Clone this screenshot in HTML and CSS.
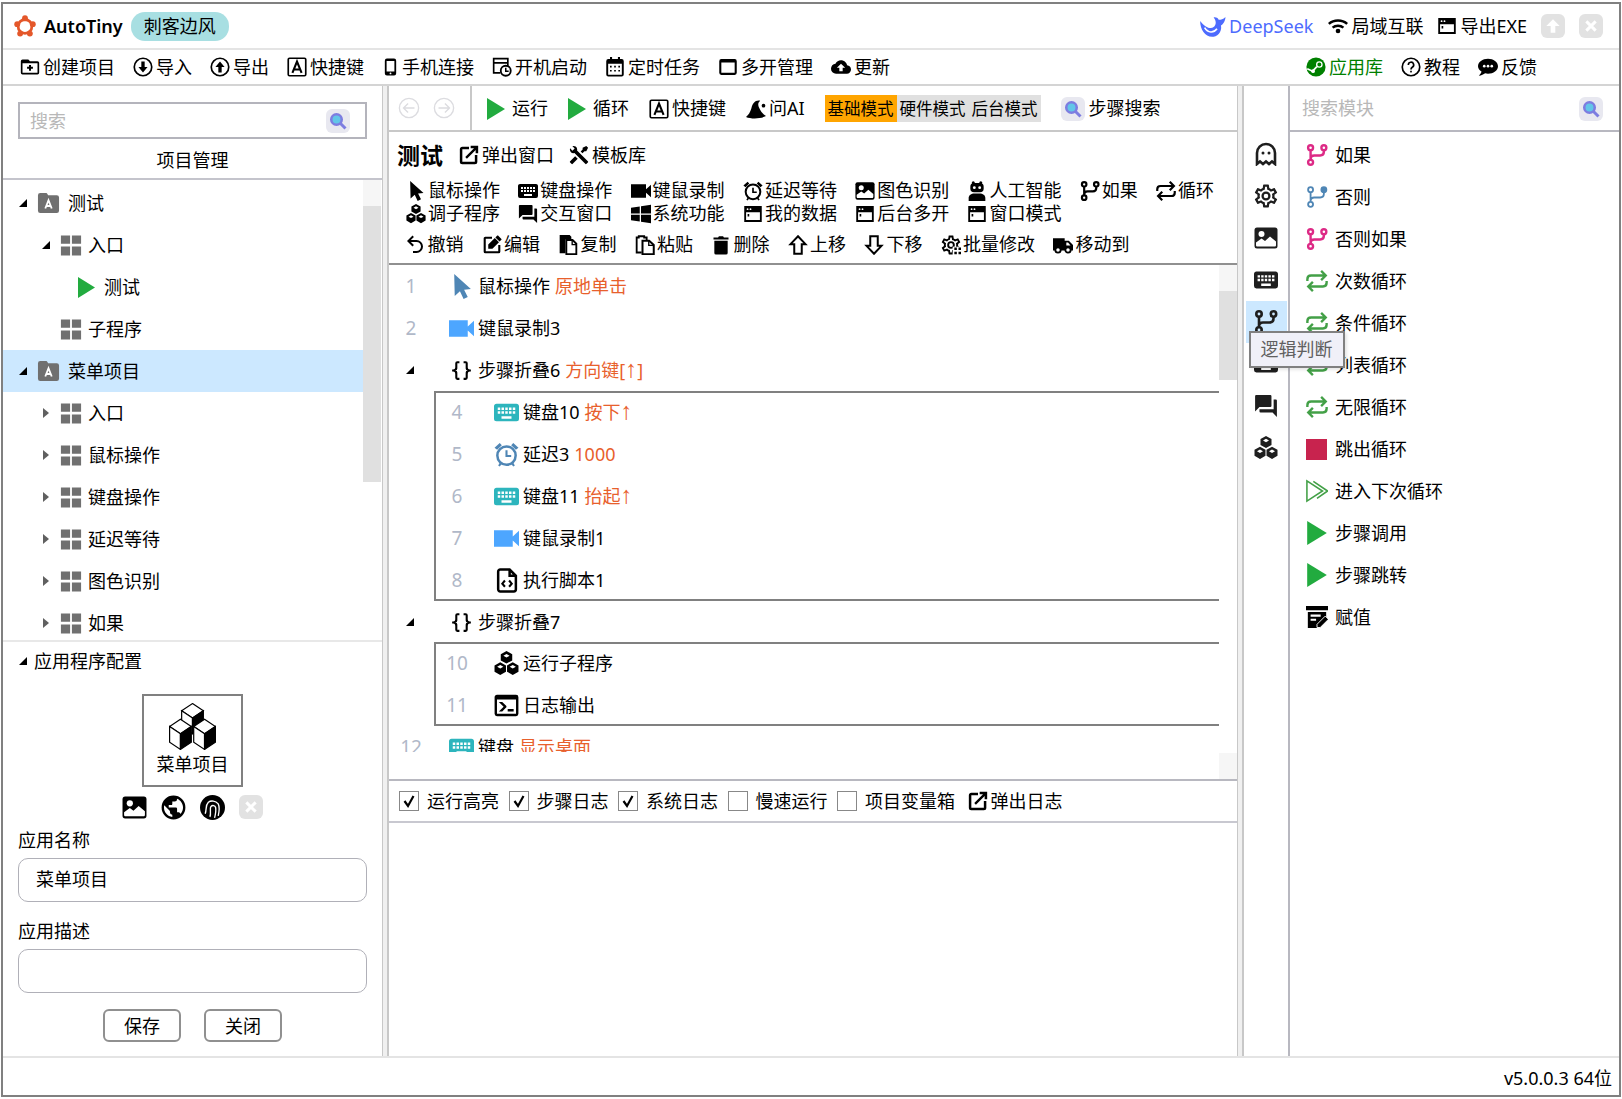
FILE: index.html
```html
<!DOCTYPE html>
<html lang="zh-CN">
<head>
    <meta charset="UTF-8">
    <title>AutoTiny</title>
    <link rel="stylesheet" href="styles.css">
</head>
<body>
<svg class="sprite" xmlns="http://www.w3.org/2000/svg">
    <defs>
        <g id="cube">
            <path d="M24 2L33 8L24 14L15 8Z" fill="#fff" stroke="#000" stroke-width="1"/>
            <path d="M15 8L24 14V27L15 21Z" fill="#fff" stroke="#000" stroke-width="1"/>
            <path d="M33 8L24 14V27L33 21Z" fill="#000" stroke="#000" stroke-width="1"/>
        </g>
        <symbol id="logo" viewBox="0 0 24 24">
            <circle cx="12" cy="12.500" r="7.500" fill="none" stroke="currentColor" stroke-width="3"/>
            <circle cx="12" cy="3.500" r="3.200"/><circle cx="20.500" cy="10" r="3.200"/><circle cx="17.300" cy="20.300" r="3.200"/><circle cx="6.700" cy="20.300" r="3.200"/><circle cx="3.500" cy="10" r="3.200"/>
        </symbol>
        <symbol id="whale" viewBox="0 0 24 24">
            <path fill="currentColor" d="M1 7C1 15 6 22 13 21C18 20.300 20.500 15 19.500 11C21.500 10 23.500 7 23.500 3.500C21.500 5.500 19.500 6 17.500 6C16.500 4 14.500 3.500 13 4C15.500 7 15.500 10.500 13 12.500C10 15 5 12 1 7Z"/>
            <path d="M5 13C8 18 13 18 16 14" fill="none" stroke="#fff" stroke-width="1.500"/>
        </symbol>
        <symbol id="wifi" viewBox="0 0 24 24">
            <path d="M1 9.500C7 4 17 4 23 9.500M5.500 14C9 11 15 11 18.500 14" fill="none" stroke="currentColor" stroke-width="3"/><circle cx="12" cy="18" r="2.800" fill="currentColor"/>
        </symbol>
        <symbol id="win" viewBox="0 0 24 24">
            <path fill="currentColor" d="M1.500 2.500H22.500V21.500H1.500ZM3.700 10V19.300H20.300V10Z"/>
            <circle cx="5.500" cy="6.200" r="1.100" fill="#fff"/><circle cx="9" cy="6.200" r="1.100" fill="#fff"/><rect x="5.500" y="12" width="2" height="3" fill="currentColor"/>
        </symbol>
        <symbol id="box" viewBox="0 0 24 24">
            <path fill="currentColor" d="M4 2.500H20A2.500 2.500 0 0 1 22.500 5V19A2.500 2.500 0 0 1 20 21.500H4A2.500 2.500 0 0 1 1.500 19V5A2.500 2.500 0 0 1 4 2.500ZM4 6.500V19H20V6.500Z"/>
        </symbol>
        <symbol id="folder-plus" viewBox="0 0 24 24">
            <path fill="currentColor" d="M3 3H10L12 5H21A2 2 0 0 1 23 7V19A2 2 0 0 1 21 21H3A2 2 0 0 1 1 19V5A2 2 0 0 1 3 3ZM3 7.500V19H21V7.500Z"/>
            <path d="M12 9.500V16.500M8.500 13H15.500" stroke="currentColor" stroke-width="2.400"/>
        </symbol>
        <symbol id="circle-down" viewBox="0 0 24 24">
            <circle cx="12" cy="12" r="10.500" fill="none" stroke="currentColor" stroke-width="2"/>
            <path fill="currentColor" d="M10 5.500H14V12H17.500L12 18.500L6.500 12H10Z"/>
        </symbol>
        <symbol id="circle-up" viewBox="0 0 24 24">
            <circle cx="12" cy="12" r="10.500" fill="none" stroke="currentColor" stroke-width="2"/>
            <path fill="currentColor" d="M10 18.500H14V12H17.500L12 5.500L6.500 12H10Z"/>
        </symbol>
        <symbol id="key-a" viewBox="0 0 24 24">
            <rect x="1.500" y="1.500" width="21" height="21" rx="1.500" fill="none" stroke="currentColor" stroke-width="2"/>
            <path d="M6.500 19L12 5.500L17.500 19M8.300 15H15.700" fill="none" stroke="currentColor" stroke-width="2.500"/>
        </symbol>
        <symbol id="phone" viewBox="0 0 24 24">
            <path fill="currentColor" d="M7 0H17A3 3 0 0 1 20 3V21A3 3 0 0 1 17 24H7A3 3 0 0 1 4 21V3A3 3 0 0 1 7 0ZM6.500 3.500V18.500H17.500V3.500Z"/>
            <circle cx="12" cy="21" r="1.300" fill="#fff"/>
        </symbol>
        <symbol id="startup" viewBox="0 0 24 24">
            <path fill="currentColor" d="M1 1H20V11H18V8H3V18H10V20H1ZM3 3V6H18V3Z"/>
            <circle cx="16.500" cy="16.500" r="6" fill="#fff" stroke="currentColor" stroke-width="2.200"/>
            <path d="M16.500 13V17H20" fill="none" stroke="currentColor" stroke-width="1.800"/>
        </symbol>
        <symbol id="calendar" viewBox="0 0 24 24">
            <path fill="currentColor" d="M6 0H8.500V2.500H15.500V0H18V2.500H20A2.500 2.500 0 0 1 22.500 5V21A2.500 2.500 0 0 1 20 23.500H4A2.500 2.500 0 0 1 1.500 21V5A2.500 2.500 0 0 1 4 2.500H6ZM3.800 8V21.200H20.200V8Z"/>
            <path d="M6 10.500H8V12.500H6ZM11 10.500H13V12.500H11ZM16 10.500H18V12.500H16ZM6 15.500H8V17.500H6ZM11 15.500H13V17.500H11ZM16 15.500H18V17.500H16Z" fill="currentColor"/>
        </symbol>
        <symbol id="cloud" viewBox="0 0 24 24">
            <path fill="currentColor" d="M14,13V17H10V13H7L12,8L17,13M19.350,10.030C18.670,6.590 15.640,4 12,4C9.110,4 6.600,5.640 5.350,8.030C2.340,8.360 0,10.900 0,14A6,6 0 0,0 6,20H19A5,5 0 0,0 24,15C24,12.360 21.950,10.220 19.350,10.030Z"/>
        </symbol>
        <symbol id="steam" viewBox="0 0 24 24">
            <circle cx="12" cy="12" r="11.500" fill="currentColor"/>
            <circle cx="16" cy="9" r="3.200" fill="none" stroke="#fff" stroke-width="1.600"/>
            <path d="M1.500 14L8 17L13 11.500" fill="none" stroke="#fff" stroke-width="2"/><circle cx="8.500" cy="17" r="2.200" fill="#fff"/>
        </symbol>
        <symbol id="help" viewBox="0 0 24 24">
            <circle cx="12" cy="12" r="10.500" fill="none" stroke="currentColor" stroke-width="2"/>
            <path d="M8.800 9.500A3.200 3.200 0 1 1 13.500 12.300C12.500 13 12 13.500 12 15" fill="none" stroke="currentColor" stroke-width="2"/><rect x="11" y="16.500" width="2" height="2" fill="currentColor"/>
        </symbol>
        <symbol id="comment" viewBox="0 0 24 24">
            <path fill="currentColor" d="M12 2C18.500 2 24 6 24 11C24 16 18.500 20 12 20C10.800 20 9.600 19.900 8.500 19.600C7 20.800 4 22.500 1 22.500C2.800 20.500 4 19 4.200 17.500C1.700 16 0 13.700 0 11C0 6 5.500 2 12 2Z"/>
            <circle cx="7.500" cy="11" r="1.600" fill="#fff"/><circle cx="12" cy="11" r="1.600" fill="#fff"/><circle cx="16.500" cy="11" r="1.600" fill="#fff"/>
        </symbol>
        <symbol id="arrow-up" viewBox="0 0 24 24">
            <path d="M12 2L22 12H15.500V22H8.500V12H2Z" fill="currentColor"/>
        </symbol>
        <symbol id="close" viewBox="0 0 24 24">
            <path d="M5 5L19 19M19 5L5 19" stroke="currentColor" stroke-width="4.500"/>
        </symbol>
        <symbol id="search" viewBox="0 0 24 24">
            <path d="M14 14L22 22" stroke="#7d7de0" stroke-width="4"/>
            <circle cx="10" cy="10" r="7" fill="#62c6e8" stroke="#7d7de0" stroke-width="3.400"/>
        </symbol>
        <symbol id="folder-a" viewBox="0 0 24 24">
            <path fill="currentColor" d="M3 1H9C10 1 10.500 1.500 11 2.500L11.500 3.500H21A2.500 2.500 0 0 1 23.500 6V20.500A2.500 2.500 0 0 1 21 23H3A2.500 2.500 0 0 1 .5 20.500V3.500A2.500 2.500 0 0 1 3 1Z"/>
            <path d="M8.500 18L12 9L15.500 18M9.700 15.300H14.300" fill="none" stroke="#fff" stroke-width="2"/>
        </symbol>
        <symbol id="grid" viewBox="0 0 24 24">
            <path fill="currentColor" d="M1 1H11V10H1ZM13 1H23V10H13ZM1 13H11V23H1ZM13 13H23V23H13Z"/>
        </symbol>
        <symbol id="play" viewBox="0 0 18 22">
            <path fill="currentColor" d="M0 0L18 11L0 22Z"/>
        </symbol>
        <symbol id="tri-open" viewBox="0 0 10 10">
            <path d="M9 1V9H1Z" fill="currentColor"/>
        </symbol>
        <symbol id="tri-closed" viewBox="0 0 10 12">
            <path d="M2 1L8 6L2 11Z" fill="currentColor"/>
        </symbol>
        <symbol id="nav-left" viewBox="0 0 24 24">
            <circle cx="12" cy="12" r="10.500" fill="none" stroke="currentColor" stroke-width="1.500"/>
            <path d="M18 12H6M11 7L6 12L11 17" fill="none" stroke="currentColor" stroke-width="1.500"/>
        </symbol>
        <symbol id="nav-right" viewBox="0 0 24 24">
            <circle cx="12" cy="12" r="10.500" fill="none" stroke="currentColor" stroke-width="1.500"/>
            <path d="M6 12H18M13 7L18 12L13 17" fill="none" stroke="currentColor" stroke-width="1.500"/>
        </symbol>
        <symbol id="hat" viewBox="0 0 24 24">
            <path fill="currentColor" d="M0 21.500C3 19 5 16 6.500 11C8 5 11 1 17 2C13.500 5 14.500 8.500 16.500 12C18 15 20.500 18.500 24 20.500C17 24 6 24 0 21.500Z"/>
            <circle cx="21" cy="8" r="2.200"/>
        </symbol>
        <symbol id="open" viewBox="0 0 24 24">
            <path fill="currentColor" d="M14,1V4H18L7.500,14.500L9.500,16.500L20,6V10H23V1ZM19,20H4V5H12V2H4C2.300,2 1,3.300 1,5V20A3,3 0 0,0 4,23H19A3,3 0 0,0 22,20V12H19Z"/>
        </symbol>
        <symbol id="tools" viewBox="1 1 22 22">
            <path fill="currentColor" d="M21.710 20.290L20.290 21.710A1 1 0 0 1 18.880 21.710L7 9.850A3.810 3.810 0 0 1 6 10A4 4 0 0 1 2.220 4.700L4.760 7.240L5.290 6.710L6.710 5.290L7.240 4.760L4.700 2.220A4 4 0 0 1 10 6A3.810 3.810 0 0 1 9.850 7L21.710 18.880A1 1 0 0 1 21.710 20.290M2.290 18.880A1 1 0 0 0 2.290 20.290L3.710 21.710A1 1 0 0 0 5.120 21.710L10.590 16.250L7.760 13.420M20 2L16 4V6L13.830 8.170L15.830 10.170L18 8H20L22 4Z"/>
        </symbol>
        <symbol id="cursor" viewBox="0 0 24 24">
            <path fill="currentColor" d="M5 0L21 14.500L14.500 15L18 22L14 24L10.500 16.500L5.500 21Z"/>
        </symbol>
        <symbol id="keyboard" viewBox="2 4 20 16">
            <path fill="currentColor" d="M19,10H17V8H19M19,13H17V11H19M16,10H14V8H16M16,13H14V11H16M16,17H8V15H16M7,10H5V8H7M7,13H5V11H7M8,11H10V13H8M8,8H10V10H8M11,11H13V13H11M11,8H13V10H11M20,5H4C2.890,5 2,5.890 2,7V17A2,2 0 0,0 4,19H20A2,2 0 0,0 22,17V7C22,5.890 21.100,5 20,5Z"/>
        </symbol>
        <symbol id="video" viewBox="0 0 24 24">
            <path fill="currentColor" d="M0 4H18V10L24 4.500V19.500L18 14V20H0Z"/>
        </symbol>
        <symbol id="alarm" viewBox="0 0 24 24">
            <circle cx="12" cy="13" r="8.800" fill="none" stroke="currentColor" stroke-width="2.400"/>
            <path d="M12 8V13.500H16.500" fill="none" stroke="currentColor" stroke-width="2"/>
            <path fill="currentColor" d="M.5 5.500L5.500 1L7.500 3L3 7.500ZM23.500 5.500L18.500 1L16.500 3L21 7.500ZM5.500 20L4 22.500L5.500 23.500L7.500 21ZM18.500 20L20 22.500L18.500 23.500L16.500 21Z"/>
        </symbol>
        <symbol id="image" viewBox="0 0 24 24">
            <rect x="0.500" y="1.500" width="23" height="21" rx="2.500" fill="currentColor"/>
            <circle cx="7.500" cy="8" r="3" fill="#fff"/>
            <path d="M2 19V16.500L7.500 12.500L11 15L16 10.500L22 15.500V19C22 20 21.500 20.500 20.500 20.500H3.500C2.500 20.500 2 20 2 19Z" fill="#fff"/>
        </symbol>
        <symbol id="robot" viewBox="0 0 24 24">
            <circle cx="7.500" cy="2" r="1.800"/><circle cx="16.500" cy="2" r="1.800"/>
            <rect x="4" y="2.500" width="16" height="11" rx="4.500" fill="currentColor"/>
            <circle cx="8.800" cy="8" r="1.700" fill="#fff"/><circle cx="15.200" cy="8" r="1.700" fill="#fff"/>
            <path fill="currentColor" d="M2 24V20.500C2 17 5 15 9 15H15C19 15 22 17 22 20.500V24Z"/>
        </symbol>
        <symbol id="branch" viewBox="0 0 24 24">
            <g fill="none" stroke="currentColor" stroke-width="2.600">
                <circle cx="5" cy="4" r="2.700"/><circle cx="19.500" cy="4" r="2.700"/><circle cx="5" cy="20" r="2.700"/>
                <path d="M5 7V17M19.500 7V8.500Q19.500 12.500 15.500 12.500H9Q5 12.500 5 16.500"/>
            </g>
        </symbol>
        <symbol id="branch-else" viewBox="0 0 24 24">
            <g fill="none" stroke="currentColor" stroke-width="2">
                <circle cx="5" cy="4" r="2.700"/><circle cx="19.500" cy="4" r="2.700" fill="currentColor"/><circle cx="5" cy="20" r="2.700"/>
                <path d="M5 7V17M19.500 7V8.500Q19.500 12.500 15.500 12.500H9Q5 12.500 5 16.500"/>
            </g>
        </symbol>
        <symbol id="loop" viewBox="0 0 24 24">
            <g fill="none" stroke="currentColor" stroke-width="2.600">
                <path d="M1.500 12V10Q1.500 6 5.500 6H21M16.500 1L21.500 6L16.500 11"/>
                <path d="M22.500 12V14Q22.500 18 18.500 18H3M7.500 13L2.500 18L7.500 23"/>
            </g>
        </symbol>
        <symbol id="hexes" viewBox="0 0 24 24">
            <path fill="currentColor" d="M12 0l5.500 3v6l-5.500 3l-5.500-3v-6zM6 10.800l5.500 3v6l-5.500 3.200l-5.500-3.200v-6zM18 10.800l5.500 3v6l-5.500 3.200l-5.500-3.200v-6z"/>
            <path fill="#fff" d="M12 2.800l3 1.700l-3 1.700l-3-1.700zM6 13.500l3 1.700l-3 1.700l-3-1.700zM18 13.500l3 1.700l-3 1.700l-3-1.700z"/>
        </symbol>
        <symbol id="forum" viewBox="1 1 22 22">
            <path fill="currentColor" d="M17,12V3A1,1 0 0,0 16,2H3A1,1 0 0,0 2,3V17L6,13H16A1,1 0 0,0 17,12M21,6H19V15H6V17A1,1 0 0,0 7,18H18L22,22V7A1,1 0 0,0 21,6Z"/>
        </symbol>
        <symbol id="windows" viewBox="0 0 24 24">
            <path fill="currentColor" d="M0 4.500L10.500 3V11.500H0ZM12 2.800L24 1V11.500H12ZM0 13H10.500V21L0 19.500ZM12 13H24V23L12 21.200Z"/>
        </symbol>
        <symbol id="undo" viewBox="2 2 20 20">
            <path fill="currentColor" d="M13.500,7A6.500,6.500 0 0,1 20,13.500A6.500,6.500 0 0,1 13.500,20H10V18H13.500C16,18 18,16 18,13.500C18,11 16,9 13.500,9H7.830L10.910,12.090L9.500,13.500L4,8L9.500,2.500L10.920,3.910L7.830,7H13.500Z"/>
        </symbol>
        <symbol id="edit" viewBox="0 0 24 24">
            <path fill="currentColor" d="M4,2C2.890,2 2,2.890 2,4V20A2,2 0 0,0 4,22H20A2,2 0 0,0 22,20V12H19.500V19.500H4.500V4.500H12V2H4M18.780,0.500C18.610,0.500 18.430,0.570 18.300,0.700L16.080,2.910L21.080,7.910L23.300,5.700C23.560,5.440 23.560,5 23.300,4.750L19.250,0.700C19.120,0.570 18.950,0.500 18.780,0.500M15.370,3.620L7.500,11.500V16.500H12.500L20.370,8.620L15.370,3.620Z"/>
        </symbol>
        <symbol id="copy" viewBox="0 0 24 24">
            <path fill="currentColor" d="M2 0H14L16 2V5H9V22H2Z"/>
            <path d="M10 6H17.500L22 10.500V23H10Z" fill="#fff" stroke="currentColor" stroke-width="2.200"/>
            <path d="M17 6V11.500H22" fill="none" stroke="currentColor" stroke-width="1.600"/>
        </symbol>
        <symbol id="paste" viewBox="0 0 24 24">
            <path fill="none" stroke="currentColor" stroke-width="2.200" d="M8 21H2V3H4.500V1.500H11V3H14V7"/>
            <path d="M9 7H17L22.500 12V23H9Z" fill="#fff" stroke="currentColor" stroke-width="2.400"/>
            <path d="M16.500 7V12.500H22.500" fill="none" stroke="currentColor" stroke-width="1.600"/>
        </symbol>
        <symbol id="trash" viewBox="0 0 24 24">
            <path fill="currentColor" d="M21,3H15.500L14.500,1.500H9.500L8.500,3H3V5.500H21M4,21.500A2,2 0 0,0 6,23.500H18A2,2 0 0,0 20,21.500V7H4Z"/>
        </symbol>
        <symbol id="up" viewBox="0 0 24 24">
            <path d="M12 1.500L21 11H16.500V22.500H7.500V11H3Z" fill="none" stroke="currentColor" stroke-width="2.400"/>
        </symbol>
        <symbol id="down" viewBox="0 0 24 24">
            <path d="M12 22.500L21 13H16.500V1.500H7.500V13H3Z" fill="none" stroke="currentColor" stroke-width="2.400"/>
        </symbol>
        <symbol id="cog" viewBox="1.500 1.500 21 21">
            <path fill="currentColor" d="M12,8A4,4 0 0,1 16,12A4,4 0 0,1 12,16A4,4 0 0,1 8,12A4,4 0 0,1 12,8M12,10A2,2 0 0,0 10,12A2,2 0 0,0 12,14A2,2 0 0,0 14,12A2,2 0 0,0 12,10M10,22C9.750,22 9.540,21.820 9.500,21.580L9.130,18.930C8.500,18.680 7.960,18.340 7.440,17.940L4.950,18.950C4.730,19.030 4.460,18.950 4.340,18.730L2.340,15.270C2.210,15.050 2.270,14.780 2.460,14.630L4.570,12.970L4.500,12L4.570,11L2.460,9.370C2.270,9.220 2.210,8.950 2.340,8.730L4.340,5.270C4.460,5.050 4.730,4.960 4.950,5.050L7.440,6.050C7.960,5.660 8.500,5.320 9.130,5.070L9.500,2.420C9.540,2.180 9.750,2 10,2H14C14.250,2 14.460,2.180 14.500,2.420L14.870,5.070C15.500,5.320 16.040,5.660 16.560,6.050L19.050,5.050C19.270,4.960 19.540,5.050 19.660,5.270L21.660,8.730C21.790,8.950 21.730,9.220 21.540,9.370L19.430,11L19.500,12L19.430,13L21.540,14.630C21.730,14.780 21.790,15.050 21.660,15.270L19.660,18.730C19.540,18.950 19.270,19.040 19.050,18.950L16.560,17.950C16.040,18.340 15.500,18.680 14.870,18.930L14.500,21.580C14.460,21.820 14.250,22 14,22H10M11.250,4L10.880,6.610C9.680,6.860 8.620,7.500 7.850,8.390L5.440,7.350L4.690,8.650L6.800,10.200C6.400,11.370 6.400,12.640 6.800,13.800L4.680,15.360L5.430,16.660L7.860,15.620C8.630,16.500 9.680,17.140 10.870,17.380L11.240,20H12.760L13.130,17.390C14.320,17.140 15.370,16.500 16.140,15.620L18.570,16.660L19.320,15.360L17.200,13.810C17.600,12.640 17.600,11.370 17.200,10.200L19.310,8.650L18.560,7.350L16.150,8.390C15.380,7.500 14.320,6.860 13.120,6.620L12.750,4H11.250Z"/>
        </symbol>
        <symbol id="cog-box" viewBox="0 0 24 24">
            <use href="#cog"/>
            <rect x="14" y="14" width="10" height="10" fill="#fff"/>
            <path fill="currentColor" d="M16 15H19V18H16ZM21 15H24V18H21ZM16 20H19V23H16ZM21 20H24V23H21Z"/>
        </symbol>
        <symbol id="truck" viewBox="0 0 24 24">
            <path fill="currentColor" d="M0 4H14V7H19L24 12V18.500H0Z"/>
            <path fill="#fff" d="M16 9V12.500H21L18 9Z"/>
            <circle cx="6" cy="18" r="3.200" fill="#fff" stroke="currentColor" stroke-width="2.200"/><circle cx="18" cy="18" r="3.200" fill="#fff" stroke="currentColor" stroke-width="2.200"/>
        </symbol>
        <symbol id="braces" viewBox="0 0 24 24">
            <path fill="currentColor" d="M8,3A2,2 0 0,0 6,5V9A2,2 0 0,1 4,11H3V13H4A2,2 0 0,1 6,15V19A2,2 0 0,0 8,21H10V19H8V14A2,2 0 0,0 6,12A2,2 0 0,0 8,10V5H10V3M16,3A2,2 0 0,1 18,5V9A2,2 0 0,0 20,11H21V13H20A2,2 0 0,0 18,15V19A2,2 0 0,1 16,21H14V19H16V14A2,2 0 0,1 18,12A2,2 0 0,1 16,10V5H14V3H16Z"/>
        </symbol>
        <symbol id="file-code" viewBox="0 0 24 24">
            <path d="M6 1.500H15L21 7.500V20.500A2 2 0 0 1 19 22.500H6A2 2 0 0 1 4 20.500V3.500A2 2 0 0 1 6 1.500ZM15 1.500V7.500H21" fill="none" stroke="currentColor" stroke-width="2.400"/>
            <path d="M10.500 12L8 15L10.500 18M14.500 12L17 15L14.500 18" fill="none" stroke="currentColor" stroke-width="2"/>
        </symbol>
        <symbol id="console" viewBox="1.500 2.500 21 19">
            <path fill="currentColor" d="M20,19V7H4V19H20M20,3A2,2 0 0,1 22,5V19A2,2 0 0,1 20,21H4A2,2 0 0,1 2,19V5C2,3.890 2.900,3 4,3H20M13,17V15H18V17H13M9.580,13L5.570,9H8.400L11.700,12.300C12.090,12.690 12.090,13.330 11.700,13.720L8.420,17H5.590L9.580,13Z"/>
        </symbol>
        <symbol id="ghost" viewBox="0 0 24 24">
            <path d="M3 22V11A9 9 0 0 1 21 11V22L18 19.500L15 22L12 19.500L9 22L6 19.500Z" fill="none" stroke="currentColor" stroke-width="2.600"/>
            <circle cx="9" cy="11" r="1.500" fill="currentColor"/><circle cx="15" cy="11" r="1.500" fill="currentColor"/>
        </symbol>
        <symbol id="earth" viewBox="1.500 1.500 21 21">
            <path fill="currentColor" d="M17.900,17.390C17.640,16.590 16.890,16 16,16H15V13A1,1 0 0,0 14,12H8V10H10A1,1 0 0,0 11,9V7H13A2,2 0 0,0 15,5V4.590C17.930,5.770 20,8.640 20,12C20,14.080 19.200,15.970 17.900,17.390M11,19.930C7.050,19.440 4,16.080 4,12C4,11.380 4.080,10.780 4.210,10.210L9,15V16A2,2 0 0,0 11,18M12,2A10,10 0 0,0 2,12A10,10 0 0,0 12,22A10,10 0 0,0 22,12A10,10 0 0,0 12,2Z"/>
        </symbol>
        <symbol id="finger" viewBox="0 0 24 24">
            <circle cx="12" cy="12" r="12" fill="currentColor"/>
            <path d="M5 18C6.500 14 5 10 8 7C10.500 5 15 5.500 17.500 8.500C19 11.500 18.500 15.500 17.500 20M9.500 21C11 17.500 9 13 10.500 11C12 9.500 14.500 10 15 12C15.500 14.500 15 18 14 22" fill="none" stroke="#fff" stroke-width="1.300"/>
        </symbol>
        <symbol id="cubes" viewBox="4.500 1.500 39 39">
            <use href="#cube" y="0"/><use href="#cube" x="-10" y="13"/><use href="#cube" x="10" y="13"/>
        </symbol>
        <symbol id="assign" viewBox="0 0 24 24">
            <path fill="currentColor" d="M0 0H24V4.500H0ZM2 6.500H22V12L13 21V24H2Z"/>
            <path d="M5 10.500H16M5 15H11" stroke="#fff" stroke-width="2.200"/>
            <path d="M12 23.500V20L21 11L24.500 14.500L15.500 23.500Z" fill="currentColor" stroke="#fff" stroke-width="1"/>
        </symbol>
        <symbol id="next" viewBox="0 0 24 24">
            <path d="M1 1L18 12L1 23Z" fill="none" stroke="currentColor" stroke-width="1.700"/>
            <path d="M8 1.500L23.500 12L12 20" fill="none" stroke="currentColor" stroke-width="1.700"/>
        </symbol>
        <symbol id="check" viewBox="0 0 16 16">
            <path d="M3.500 8L7 13L12.500 3" fill="none" stroke="currentColor" stroke-width="2.200"/>
        </symbol>
    </defs>
</svg>

<div class="window">
    <header class="titlebar">
        <div class="brand">
            <svg class="brand-logo"><use href="#logo"/></svg>
            <span class="brand-name">AutoTiny</span>
            <span class="user-pill">刺客边风</span>
        </div>
        <div class="title-tools">
            <span class="tool deepseek"><svg class="ic ic-whale"><use href="#whale"/></svg>DeepSeek</span>
            <span class="tool"><svg class="ic"><use href="#wifi"/></svg>局域互联</span>
            <span class="tool"><svg class="ic"><use href="#win"/></svg>导出EXE</span>
            <span class="dis-btn"><svg><use href="#arrow-up"/></svg></span>
            <span class="dis-btn"><svg><use href="#close"/></svg></span>
        </div>
    </header>

    <nav class="menubar">
        <div class="menu-group">
            <span class="tool"><svg class="ic"><use href="#folder-plus"/></svg>创建项目</span>
            <span class="tool"><svg class="ic"><use href="#circle-down"/></svg>导入</span>
            <span class="tool"><svg class="ic"><use href="#circle-up"/></svg>导出</span>
            <span class="tool"><svg class="ic"><use href="#key-a"/></svg>快捷键</span>
            <span class="tool"><svg class="ic ic-phone"><use href="#phone"/></svg>手机连接</span>
            <span class="tool"><svg class="ic"><use href="#startup"/></svg>开机启动</span>
            <span class="tool"><svg class="ic"><use href="#calendar"/></svg>定时任务</span>
            <span class="tool"><svg class="ic"><use href="#box"/></svg>多开管理</span>
            <span class="tool"><svg class="ic"><use href="#cloud"/></svg>更新</span>
        </div>
        <div class="menu-group">
            <span class="tool app-store"><svg class="ic"><use href="#steam"/></svg>应用库</span>
            <span class="tool"><svg class="ic"><use href="#help"/></svg>教程</span>
            <span class="tool"><svg class="ic"><use href="#comment"/></svg>反馈</span>
        </div>
    </nav>

    <main class="main">
        <aside class="left">
            <div class="search-box">
                <span class="placeholder">搜索</span>
                <span class="search-btn"><svg><use href="#search"/></svg></span>
            </div>
            <div class="panel-title">项目管理</div>
            <div class="tree">
                <div class="tree-list">
                    <div class="tree-row lvl1"><svg class="tri"><use href="#tri-open"/></svg><svg class="node-folder"><use href="#folder-a"/></svg>测试</div>
                    <div class="tree-row lvl2"><svg class="tri"><use href="#tri-open"/></svg><svg class="node-grid"><use href="#grid"/></svg>入口</div>
                    <div class="tree-row lvl3"><svg class="node-play"><use href="#play"/></svg>测试</div>
                    <div class="tree-row lvl2"><span class="tri"></span><svg class="node-grid"><use href="#grid"/></svg>子程序</div>
                    <div class="tree-row lvl1 selected"><svg class="tri"><use href="#tri-open"/></svg><svg class="node-folder"><use href="#folder-a"/></svg>菜单项目</div>
                    <div class="tree-row lvl2"><svg class="tri closed"><use href="#tri-closed"/></svg><svg class="node-grid"><use href="#grid"/></svg>入口</div>
                    <div class="tree-row lvl2"><svg class="tri closed"><use href="#tri-closed"/></svg><svg class="node-grid"><use href="#grid"/></svg>鼠标操作</div>
                    <div class="tree-row lvl2"><svg class="tri closed"><use href="#tri-closed"/></svg><svg class="node-grid"><use href="#grid"/></svg>键盘操作</div>
                    <div class="tree-row lvl2"><svg class="tri closed"><use href="#tri-closed"/></svg><svg class="node-grid"><use href="#grid"/></svg>延迟等待</div>
                    <div class="tree-row lvl2"><svg class="tri closed"><use href="#tri-closed"/></svg><svg class="node-grid"><use href="#grid"/></svg>图色识别</div>
                    <div class="tree-row lvl2"><svg class="tri closed"><use href="#tri-closed"/></svg><svg class="node-grid"><use href="#grid"/></svg>如果</div>
                </div>
                <div class="scrollbar tree-scroll">
                    <span class="sb-btn"></span>
                    <span class="sb-thumb"></span>
                </div>
            </div>
            <section class="app-config">
                <div class="config-head"><svg class="tri"><use href="#tri-open"/></svg>应用程序配置</div>
                <div class="app-tile">
                    <svg class="tile-cubes"><use href="#cubes"/></svg>
                    <span>菜单项目</span>
                </div>
                <div class="tile-actions">
                    <svg class="ic-lg"><use href="#image"/></svg>
                    <svg class="ic-lg"><use href="#earth"/></svg>
                    <svg class="ic-lg"><use href="#finger"/></svg>
                    <span class="dis-btn"><svg><use href="#close"/></svg></span>
                </div>
                <label class="field-label">应用名称</label>
                <div class="field">菜单项目</div>
                <label class="field-label second">应用描述</label>
                <div class="field"></div>
                <div class="form-btns">
                    <span class="btn">保存</span>
                    <span class="btn">关闭</span>
                </div>
            </section>
        </aside>

        <div class="splitter"></div>

        <section class="center">
            <div class="toolbar">
                <div class="nav-btns">
                    <svg><use href="#nav-left"/></svg>
                    <svg><use href="#nav-right"/></svg>
                </div>
                <div class="toolbar-items">
                    <span class="tool run"><svg class="ic-play"><use href="#play"/></svg>运行</span>
                    <span class="tool run"><svg class="ic-play"><use href="#play"/></svg>循环</span>
                    <span class="tool"><svg class="ic"><use href="#key-a"/></svg>快捷键</span>
                    <span class="tool"><svg class="ic"><use href="#hat"/></svg>问AI</span>
                    <div class="mode-seg">
                        <span class="mode active">基础模式</span>
                        <span class="mode">硬件模式</span>
                        <span class="mode">后台模式</span>
                    </div>
                    <span class="tool step-search"><span class="search-btn"><svg><use href="#search"/></svg></span>步骤搜索</span>
                </div>
            </div>

            <div class="editor-head">
                <div class="proj-row">
                    <strong class="proj-name">测试</strong>
                    <span class="tool"><svg class="ic"><use href="#open"/></svg>弹出窗口</span>
                    <span class="tool"><svg class="ic"><use href="#tools"/></svg>模板库</span>
                </div>
                <div class="cat-grid">
                    <span class="tool"><svg class="ic"><use href="#cursor"/></svg>鼠标操作</span>
                    <span class="tool"><svg class="ic"><use href="#keyboard"/></svg>键盘操作</span>
                    <span class="tool"><svg class="ic"><use href="#video"/></svg>键鼠录制</span>
                    <span class="tool"><svg class="ic"><use href="#alarm"/></svg>延迟等待</span>
                    <span class="tool"><svg class="ic"><use href="#image"/></svg>图色识别</span>
                    <span class="tool"><svg class="ic"><use href="#robot"/></svg>人工智能</span>
                    <span class="tool"><svg class="ic"><use href="#branch"/></svg>如果</span>
                    <span class="tool"><svg class="ic"><use href="#loop"/></svg>循环</span>
                    <span class="tool"><svg class="ic"><use href="#hexes"/></svg>调子程序</span>
                    <span class="tool"><svg class="ic"><use href="#forum"/></svg>交互窗口</span>
                    <span class="tool"><svg class="ic"><use href="#windows"/></svg>系统功能</span>
                    <span class="tool"><svg class="ic"><use href="#win"/></svg>我的数据</span>
                    <span class="tool"><svg class="ic"><use href="#win"/></svg>后台多开</span>
                    <span class="tool"><svg class="ic"><use href="#win"/></svg>窗口模式</span>
                </div>
                <div class="edit-row">
                    <span class="tool"><svg class="ic"><use href="#undo"/></svg>撤销</span>
                    <span class="tool"><svg class="ic"><use href="#edit"/></svg>编辑</span>
                    <span class="tool"><svg class="ic"><use href="#copy"/></svg>复制</span>
                    <span class="tool"><svg class="ic"><use href="#paste"/></svg>粘贴</span>
                    <span class="tool"><svg class="ic"><use href="#trash"/></svg>删除</span>
                    <span class="tool"><svg class="ic"><use href="#up"/></svg>上移</span>
                    <span class="tool"><svg class="ic"><use href="#down"/></svg>下移</span>
                    <span class="tool"><svg class="ic"><use href="#cog-box"/></svg>批量修改</span>
                    <span class="tool"><svg class="ic"><use href="#truck"/></svg>移动到</span>
                </div>
            </div>

            <div class="step-area">
                <div class="step-list">
                    <div class="step"><span class="num">1</span><svg class="step-ic c-blue"><use href="#cursor"/></svg>鼠标操作 <em>原地单击</em></div>
                    <div class="step"><span class="num">2</span><svg class="step-ic c-video"><use href="#video"/></svg>键鼠录制3</div>
                    <div class="step"><span class="num"><svg class="tri"><use href="#tri-open"/></svg></span><svg class="step-ic"><use href="#braces"/></svg>步骤折叠6 <em>方向键[<span class="arr">↑</span>]</em></div>
                    <div class="group">
                        <div class="step"><span class="num">4</span><svg class="step-ic c-teal"><use href="#keyboard"/></svg>键盘10 <em>按下<span class="arr">↑</span></em></div>
                        <div class="step"><span class="num">5</span><svg class="step-ic c-blue"><use href="#alarm"/></svg>延迟3 <em>1000</em></div>
                        <div class="step"><span class="num">6</span><svg class="step-ic c-teal"><use href="#keyboard"/></svg>键盘11 <em>抬起<span class="arr">↑</span></em></div>
                        <div class="step"><span class="num">7</span><svg class="step-ic c-video"><use href="#video"/></svg>键鼠录制1</div>
                        <div class="step"><span class="num">8</span><svg class="step-ic"><use href="#file-code"/></svg>执行脚本1</div>
                    </div>
                    <div class="step"><span class="num"><svg class="tri"><use href="#tri-open"/></svg></span><svg class="step-ic"><use href="#braces"/></svg>步骤折叠7</div>
                    <div class="group second">
                        <div class="step"><span class="num">10</span><svg class="step-ic"><use href="#hexes"/></svg>运行子程序</div>
                        <div class="step"><span class="num">11</span><svg class="step-ic"><use href="#console"/></svg>日志输出</div>
                    </div>
                    <div class="step"><span class="num">12</span><svg class="step-ic c-teal"><use href="#keyboard"/></svg>键盘 <em>显示桌面</em></div>
                </div>
                <div class="scrollbar step-scroll">
                    <span class="sb-btn"></span>
                    <span class="sb-thumb"></span>
                    <span class="sb-rest"></span>
                    <span class="sb-btn"></span>
                </div>
            </div>

            <div class="options">
                <span class="opt"><span class="cb"><svg><use href="#check"/></svg></span>运行高亮</span>
                <span class="opt"><span class="cb"><svg><use href="#check"/></svg></span>步骤日志</span>
                <span class="opt"><span class="cb"><svg><use href="#check"/></svg></span>系统日志</span>
                <span class="opt"><span class="cb"></span>慢速运行</span>
                <span class="opt"><span class="cb"></span>项目变量箱</span>
                <span class="tool pop-log"><svg class="ic"><use href="#open"/></svg>弹出日志</span>
            </div>
            <div class="log"></div>
        </section>

        <div class="splitter"></div>

        <div class="rail">
            <span class="rail-item"><svg><use href="#ghost"/></svg></span>
            <span class="rail-item"><svg><use href="#cog"/></svg></span>
            <span class="rail-item"><svg><use href="#image"/></svg></span>
            <span class="rail-item"><svg><use href="#keyboard"/></svg></span>
            <span class="rail-item active"><svg><use href="#branch"/></svg><span class="tooltip">逻辑判断</span></span>
            <span class="rail-item"><svg><use href="#keyboard"/></svg></span>
            <span class="rail-item"><svg><use href="#forum"/></svg></span>
            <span class="rail-item"><svg><use href="#hexes"/></svg></span>
        </div>

        <aside class="right">
            <div class="module-search">
                <span class="placeholder">搜索模块</span>
                <span class="search-btn"><svg><use href="#search"/></svg></span>
            </div>
            <div class="module-list">
                <div class="module"><svg class="c-pink"><use href="#branch"/></svg>如果</div>
                <div class="module"><svg class="c-blue"><use href="#branch-else"/></svg>否则</div>
                <div class="module"><svg class="c-pink"><use href="#branch"/></svg>否则如果</div>
                <div class="module"><svg class="c-green"><use href="#loop"/></svg>次数循环</div>
                <div class="module"><svg class="c-green"><use href="#loop"/></svg>条件循环</div>
                <div class="module"><svg class="c-green"><use href="#loop"/></svg>列表循环</div>
                <div class="module"><svg class="c-green"><use href="#loop"/></svg>无限循环</div>
                <div class="module"><span class="stop-square"></span>跳出循环</div>
                <div class="module"><svg class="c-green"><use href="#next"/></svg>进入下次循环</div>
                <div class="module"><svg class="c-play"><use href="#play"/></svg>步骤调用</div>
                <div class="module"><svg class="c-play"><use href="#play"/></svg>步骤跳转</div>
                <div class="module"><svg><use href="#assign"/></svg>赋值</div>
            </div>
        </aside>
    </main>

    <footer class="statusbar">v5.0.0.3 64位</footer>
</div>
</body>
</html>
```

FILE: styles.css
```css
* {
    box-sizing: border-box;
}
html, body {
    margin: 0;
    padding: 0;
    background-color: #ffffff;
    overflow: hidden;
}
body {
    font-family: "Noto Sans", "Noto Sans CJK SC", sans-serif;
    font-size: 18px;
    line-height: 23px;
    color: #000000;
    white-space: nowrap;
}
em {
    font-style: normal;
}
svg {
    fill: currentColor;
    flex: none;
}
.sprite {
    position: absolute;
    width: 0;
    height: 0;
}
.window {
    margin: 2px 1px 0;
    width: 1620px;
    height: 1095px;
    border: 2px solid #808080;
    display: flex;
    flex-direction: column;
}

/* title bar */
.titlebar {
    height: 44px;
    flex: none;
    display: flex;
    align-items: center;
    justify-content: space-between;
    padding: 0 16px 0 11px;
}
.brand {
    display: flex;
    align-items: center;
}
.brand-logo {
    width: 22px;
    height: 22px;
    color: #e4572a;
    fill: #e4572a;
    margin-right: 8px;
}
.brand-name {
    font-weight: 600;
    margin-right: 8px;
}
.user-pill {
    background-color: #a8dfe2;
    border-radius: 14px;
    padding: 3px 13px;
    height: 29px;
}
.title-tools {
    display: flex;
    align-items: center;
    gap: 14px;
}
.tool {
    display: inline-flex;
    align-items: center;
    gap: 3px;
}
.ic {
    width: 20px;
    height: 20px;
}
.ic-whale {
    width: 27px;
    height: 27px;
    margin-left: -3px;
}
.ic-phone {
    width: 17px;
}
.deepseek {
    color: #4d6bfe;
    margin-right: 1px;
}
.dis-btn {
    width: 24px;
    height: 24px;
    background-color: #e2e2e2;
    border-radius: 6px;
    color: #ffffff;
    display: inline-flex;
    align-items: center;
    justify-content: center;
}
.dis-btn svg {
    width: 16px;
    height: 16px;
}

/* menu */
.menubar {
    height: 38px;
    flex: none;
    border-top: 2px solid #e4e4e4;
    border-bottom: 2px solid #d4d4d4;
    display: flex;
    justify-content: space-between;
    align-items: center;
    padding: 0 82px 0 17px;
}
.menu-group {
    display: flex;
    gap: 18px;
}
.app-store {
    color: #008000;
}

/* main columns */
.main {
    flex: 1;
    display: flex;
    min-height: 0;
}
.left {
    width: 379px;
    flex: none;
    display: flex;
    flex-direction: column;
}
.splitter {
    width: 7px;
    flex: none;
    background-color: #f0f0f0;
    border-left: 1px solid #c8c8c8;
    border-right: 2px solid #c8c8c8;
}
.center {
    width: 848px;
    flex: none;
    display: flex;
    flex-direction: column;
    min-width: 0;
}
.search-box {
    margin: 16px 15px 0;
    height: 37px;
    flex: none;
    border: 2px solid #b4b4bc;
    display: flex;
    align-items: center;
    justify-content: space-between;
    padding: 1px 15px 0 10px;
}
.placeholder {
    color: #b8b8b8;
}
.search-btn {
    width: 24px;
    height: 24px;
    background-color: #e8e8f0;
    border-radius: 6px;
    display: inline-flex;
    align-items: center;
    justify-content: center;
}
.search-btn svg {
    width: 18px;
    height: 18px;
}
.panel-title {
    height: 41px;
    flex: none;
    text-align: center;
    padding-top: 10px;
    border-bottom: 2px solid #c4c4cc;
}

/* project tree */
.tree {
    height: 462px;
    flex: none;
    display: flex;
    overflow: hidden;
    border-bottom: 2px solid #e8e8e8;
}
.tree-list {
    flex: 1;
    padding-top: 2px;
    overflow: hidden;
}
.tree-row {
    height: 42px;
    display: flex;
    align-items: center;
}
.tree-row.selected {
    background-color: #cce8ff;
}
.lvl1 {
    padding-left: 15px;
}
.lvl2 {
    padding-left: 38px;
}
.lvl3 {
    padding-left: 75px;
}
.tri {
    width: 10px;
    height: 10px;
    margin-right: 9px;
    color: #000000;
    display: inline-block;
}
.tri.closed {
    color: #606060;
    height: 12px;
}
.node-folder {
    width: 23px;
    height: 22px;
    color: #707070;
    margin-right: 8px;
}
.node-grid {
    width: 22px;
    height: 23px;
    color: #707070;
    margin-right: 6px;
}
.node-play {
    width: 17px;
    height: 21px;
    color: #22ab3f;
    margin-right: 9px;
}
.scrollbar {
    width: 18px;
    flex: none;
    display: flex;
    flex-direction: column;
}
.tree-scroll {
    margin-right: 1px;
}
.sb-btn {
    height: 26px;
    flex: none;
    background-color: #f6f6f6;
}
.sb-thumb {
    background-color: #e0e0e0;
    flex: none;
}
.tree-scroll .sb-thumb {
    height: 276px;
}
.step-scroll .sb-thumb {
    height: 89px;
}
.sb-rest {
    flex: 1;
}

/* app config */
.app-config {
    flex: 1;
    padding: 6px 15px 0;
    display: flex;
    flex-direction: column;
}
.config-head {
    display: flex;
    align-items: center;
    line-height: 26px;
}
.config-head .tri {
    margin-right: 6px;
}
.app-tile {
    align-self: center;
    margin-top: 20px;
    width: 101px;
    height: 93px;
    border: 2px solid #808080;
    display: flex;
    flex-direction: column;
    align-items: center;
    padding-top: 7px;
}
.tile-cubes {
    width: 47px;
    height: 47px;
    margin-bottom: 3px;
}
.tile-actions {
    align-self: center;
    margin-top: 7px;
    display: flex;
    align-items: center;
    gap: 14px;
    height: 26px;
}
.ic-lg {
    width: 25px;
    height: 25px;
}
.field-label {
    margin-top: 8px;
    line-height: 24px;
}
.field-label.second {
    margin-top: 17px;
}
.field {
    margin-top: 6px;
    height: 44px;
    border: 1.5px solid #b0b0b8;
    border-radius: 10px;
    line-height: 41px;
    padding-left: 17px;
}
.form-btns {
    display: flex;
    justify-content: center;
    gap: 23px;
    margin-top: 16px;
}
.btn {
    width: 78px;
    height: 33px;
    border: 2px solid #909090;
    border-radius: 6px;
    text-align: center;
    line-height: 30px;
}

/* center toolbar */
.toolbar {
    height: 46px;
    flex: none;
    display: flex;
    border-bottom: 2px solid #c8c8c8;
}
.nav-btns {
    width: 83px;
    flex: none;
    border-right: 2px solid #c8c8c8;
    display: flex;
    align-items: center;
    gap: 13px;
    padding-left: 9px;
    color: #dcdce0;
}
.nav-btns svg {
    width: 22px;
    height: 22px;
}
.toolbar-items {
    display: flex;
    align-items: center;
    gap: 20px;
    padding: 1px 0 0 15px;
}
.run {
    gap: 7px;
}
.ic-play {
    width: 18px;
    height: 22px;
    color: #22ab3f;
}
.mode-seg {
    display: flex;
    height: 27px;
    line-height: 27px;
    font-size: 16.500px;
    background-color: #e0e0e0;
}
.mode {
    width: 72px;
    text-align: center;
}
.mode.active {
    background-color: #ffa500;
}
.step-search {
    gap: 4px;
}

/* step editor head */
.editor-head {
    height: 133px;
    flex: none;
    border-bottom: 2px solid #909090;
    padding-top: 11px;
}
.proj-row {
    display: flex;
    align-items: center;
    height: 24px;
    padding-left: 8px;
    gap: 15px;
}
.proj-name {
    font-size: 23px;
    font-weight: 700;
    margin-right: 1px;
}
.cat-grid {
    display: flex;
    flex-wrap: wrap;
    gap: 0 18.300px;
    margin-top: 12px;
    padding-left: 17px;
    width: 840px;
}
.cat-grid .tool {
    gap: 2px;
}
.edit-row {
    display: flex;
    gap: 18px;
    margin-top: 8px;
    padding-left: 16px;
}
.edit-row .tool {
    gap: 2.500px;
}

/* step list */
.step-area {
    height: 514px;
    flex: none;
    display: flex;
    justify-content: space-between;
}
.step-list {
    flex: 1;
    height: 487px;
    overflow: hidden;
}
.step {
    height: 42px;
    display: flex;
    align-items: center;
}
.num {
    width: 44px;
    margin-right: 16px;
    text-align: center;
    color: #b0b8c8;
    font-size: 19px;
    display: flex;
    align-items: center;
    justify-content: center;
}
.num .tri {
    margin: 0 0 0 -2px;
}
.step-ic {
    width: 25px;
    height: 25px;
    margin-right: 4px;
}
.step em {
    color: #e8602c;
    margin-left: 5px;
}
.arr {
    font-family: "Liberation Sans", sans-serif;
    font-size: 24px;
    line-height: 0;
}
.group {
    margin-left: 45px;
    border: 2px solid #808080;
    border-right: none;
}
.group.second {
    margin-top: -1px;
}
.group .step:first-child {
    margin-top: -2px;
}
.group .step:last-child {
    margin-bottom: -2px;
}
.group .num {
    width: 42px;
}
.c-blue {
    color: #4f86b5;
}
.c-video {
    color: #4da6ff;
}
.c-teal {
    color: #2db5bd;
}
.c-pink {
    color: #dd2a86;
}
.c-green {
    color: #43a047;
}
.c-play {
    color: #22ab3f;
}

/* options */
.options {
    height: 44px;
    flex: none;
    display: flex;
    align-items: center;
    gap: 9.500px;
    padding-left: 10px;
    border-top: 2px solid #b8b8c0;
    border-bottom: 2px solid #c8c8d0;
}
.opt {
    display: inline-flex;
    align-items: center;
    gap: 8px;
}
.cb {
    width: 20px;
    height: 20px;
    border: 1.5px solid #888888;
    display: inline-flex;
    align-items: center;
    justify-content: center;
}
.cb svg {
    width: 16px;
    height: 16px;
}
.pop-log {
    margin-left: 3px;
}
.log {
    flex: 1;
}

/* icon rail */
.rail {
    width: 46px;
    flex: none;
    border-right: 2px solid #b8b8c0;
    padding-top: 47px;
    display: flex;
    flex-direction: column;
    align-items: center;
}
.rail-item {
    width: 41px;
    height: 42px;
    flex: none;
    position: relative;
    display: flex;
    align-items: center;
    justify-content: center;
    color: #1e1e1e;
}
.rail-item > svg {
    width: 24px;
    height: 24px;
}
.rail-item.active {
    background-color: #cce8ff;
}
.tooltip {
    position: absolute;
    z-index: 5;
    top: 30px;
    left: 3px;
    width: 96px;
    height: 37px;
    line-height: 33px;
    text-align: center;
    background-color: #f0f0f8;
    border: 2px solid #808080;
    color: #606060;
    box-shadow: 2px 2px 3px rgba(0,0,0,0.1);
}

/* module list */
.right {
    flex: 1;
    display: flex;
    flex-direction: column;
    min-width: 0;
}
.module-search {
    height: 46px;
    flex: none;
    border-bottom: 2px solid #b8b8c0;
    display: flex;
    align-items: center;
    justify-content: space-between;
    padding: 1px 16px 0 12px;
}
.module-list {
    padding-top: 2px;
}
.module {
    height: 42px;
    display: flex;
    align-items: center;
    padding-left: 16px;
}
.module svg {
    width: 22px;
    height: 24px;
    margin-right: 7px;
}
.stop-square {
    width: 21px;
    height: 21px;
    background-color: #c8234e;
    margin-right: 8px;
}

.statusbar {
    height: 39px;
    flex: none;
    border-top: 2px solid #e4e4e4;
    text-align: right;
    line-height: 38px;
    padding: 1px 7px 0 0;
}
```
